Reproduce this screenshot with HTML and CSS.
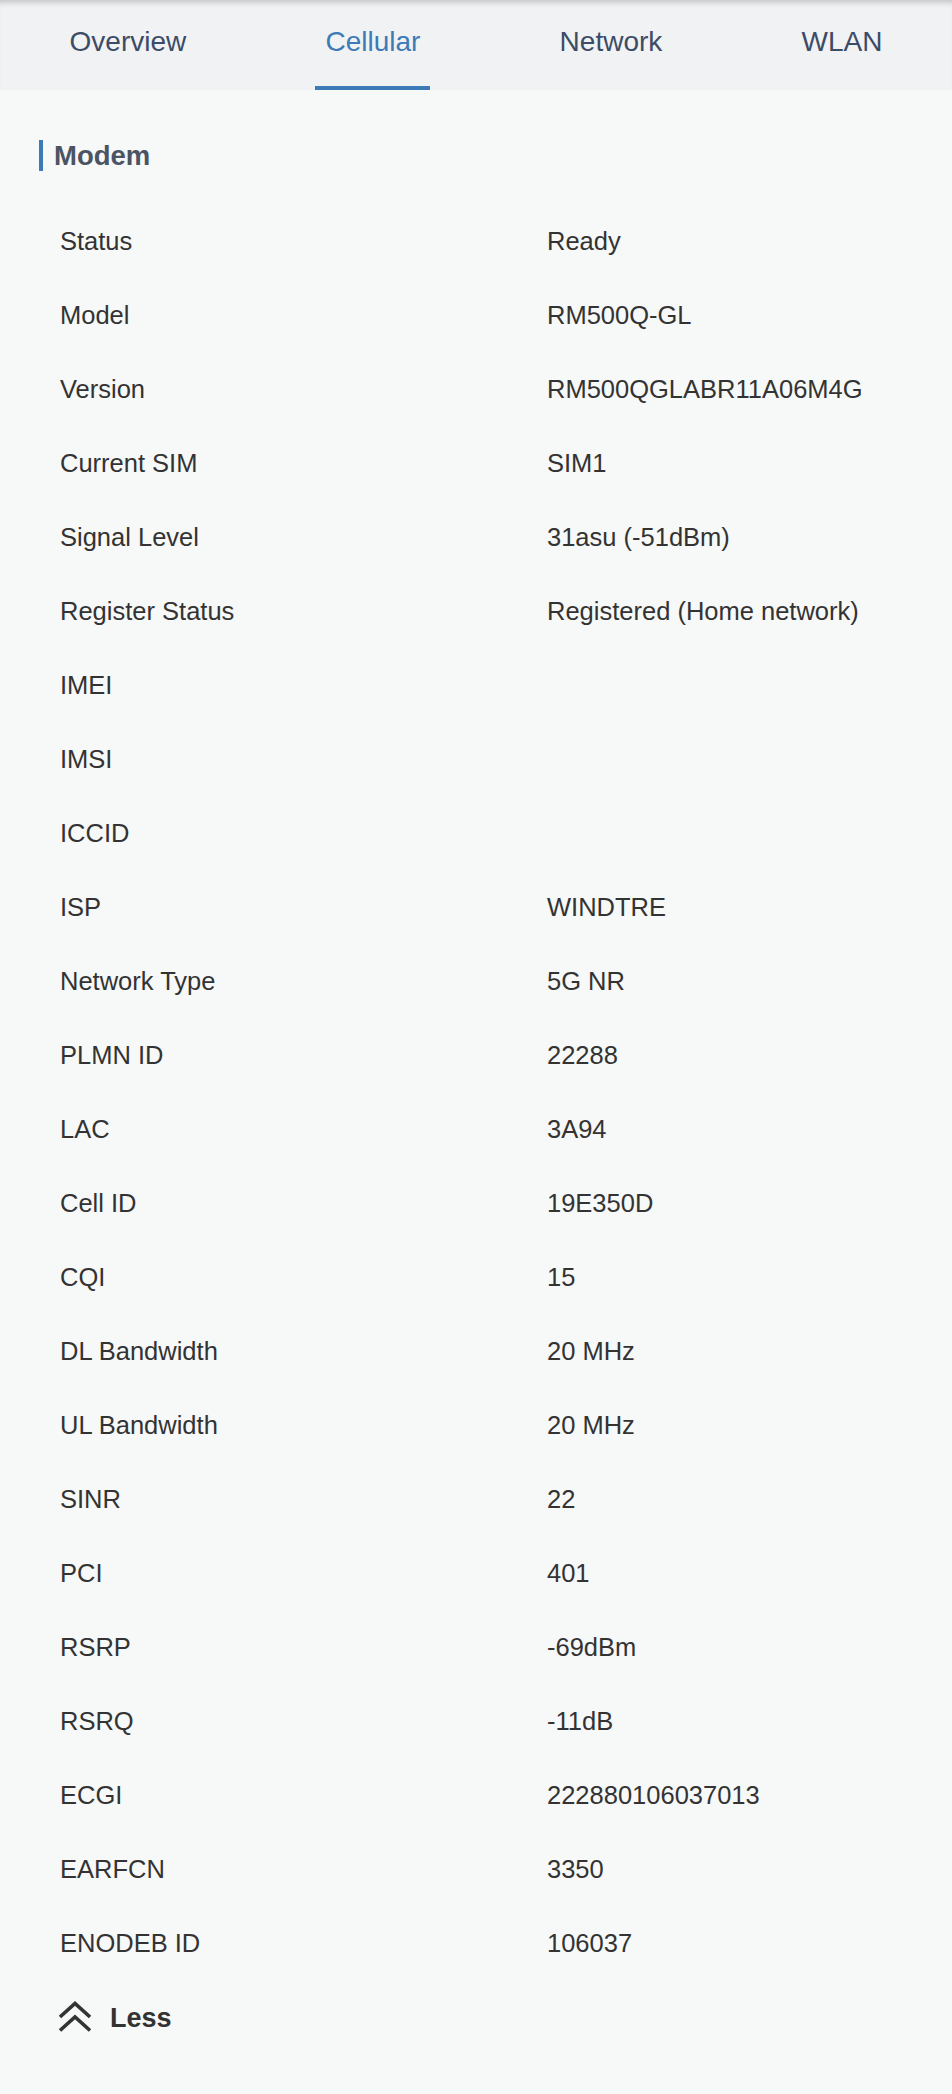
FILE: index.html
```html
<!doctype html>
<html lang="en">
<head>
  <meta charset="UTF-8">
  <title>Cellular</title>
  <link rel="stylesheet" href="styles.css">
</head>
<body>
  <ul class="tabs">
    <li><a>Overview</a></li>
    <li class="on"><a>Cellular</a></li>
    <li><a>Network</a></li>
    <li><a>WLAN</a></li>
  </ul>

  <div class="section">
    <h2 class="title">Modem</h2>
    <dl class="rows">
      <div class="row"><dt>Status</dt><dd>Ready</dd></div>
      <div class="row"><dt>Model</dt><dd>RM500Q-GL</dd></div>
      <div class="row"><dt>Version</dt><dd>RM500QGLABR11A06M4G</dd></div>
      <div class="row"><dt>Current SIM</dt><dd>SIM1</dd></div>
      <div class="row"><dt>Signal Level</dt><dd>31asu (-51dBm)</dd></div>
      <div class="row"><dt>Register Status</dt><dd>Registered (Home network)</dd></div>
      <div class="row"><dt>IMEI</dt><dd></dd></div>
      <div class="row"><dt>IMSI</dt><dd></dd></div>
      <div class="row"><dt>ICCID</dt><dd></dd></div>
      <div class="row"><dt>ISP</dt><dd>WINDTRE</dd></div>
      <div class="row"><dt>Network Type</dt><dd>5G NR</dd></div>
      <div class="row"><dt>PLMN ID</dt><dd>22288</dd></div>
      <div class="row"><dt>LAC</dt><dd>3A94</dd></div>
      <div class="row"><dt>Cell ID</dt><dd>19E350D</dd></div>
      <div class="row"><dt>CQI</dt><dd>15</dd></div>
      <div class="row"><dt>DL Bandwidth</dt><dd>20 MHz</dd></div>
      <div class="row"><dt>UL Bandwidth</dt><dd>20 MHz</dd></div>
      <div class="row"><dt>SINR</dt><dd>22</dd></div>
      <div class="row"><dt>PCI</dt><dd>401</dd></div>
      <div class="row"><dt>RSRP</dt><dd>-69dBm</dd></div>
      <div class="row"><dt>RSRQ</dt><dd>-11dB</dd></div>
      <div class="row"><dt>ECGI</dt><dd>222880106037013</dd></div>
      <div class="row"><dt>EARFCN</dt><dd>3350</dd></div>
      <div class="row"><dt>ENODEB ID</dt><dd>106037</dd></div>
    </dl>
    <a class="less">
      <svg width="32" height="32" viewBox="0 0 32 32" fill="none" stroke="#333" stroke-width="3.6">
        <polyline points="1,17 16,3.5 31,17"/>
        <polyline points="1,30.5 16,17 31,30.5"/>
      </svg>
      <span>Less</span>
    </a>
  </div>
</body>
</html>
```

FILE: styles.css
```css
*{margin:0;
  padding:0;
  list-style:none;}
body{background:#f7f8f8;
     font-family:"Liberation Sans", Arial, sans-serif;
     color:#333;}

/* tabs */
.tabs{display:flex;
      justify-content:space-around;
      height:90px;
      background:#f1f2f4;
      box-shadow:inset 0 7px 6px -5px rgba(0,0,0,.22);}
.tabs li a{display:block;
           padding:26px 10px 28px;
           font-size:28px;
           line-height:32px;
           color:#3c4c66;
           border-bottom:4px solid transparent;
           cursor:pointer;}
.tabs .on a{color:#3d7ab8;
            border-bottom-color:#3d7ab8;}

/* section */
.section{padding:50px 39px 0;}
.title{border-left:4px solid #3d7ab8;
       padding-left:11px;
       font-size:27.5px;
       line-height:31px;
       font-weight:bold;
       color:#4a5463;}
.rows{display:flex;
      flex-direction:column;
      gap:44px;
      margin-top:55px;
      padding-left:21px;}
.row{display:grid;
     grid-template-columns:487px 1fr;
     font-size:25.5px;
     line-height:30px;
     min-height:30px;}

.less{display:flex;
      align-items:center;
      gap:19px;
      margin-top:39px;
      padding-left:20px;
      cursor:pointer;}
.less span{font-size:27px;
           line-height:32px;
           font-weight:bold;
           color:#333;
           padding-top:5px;}
```
